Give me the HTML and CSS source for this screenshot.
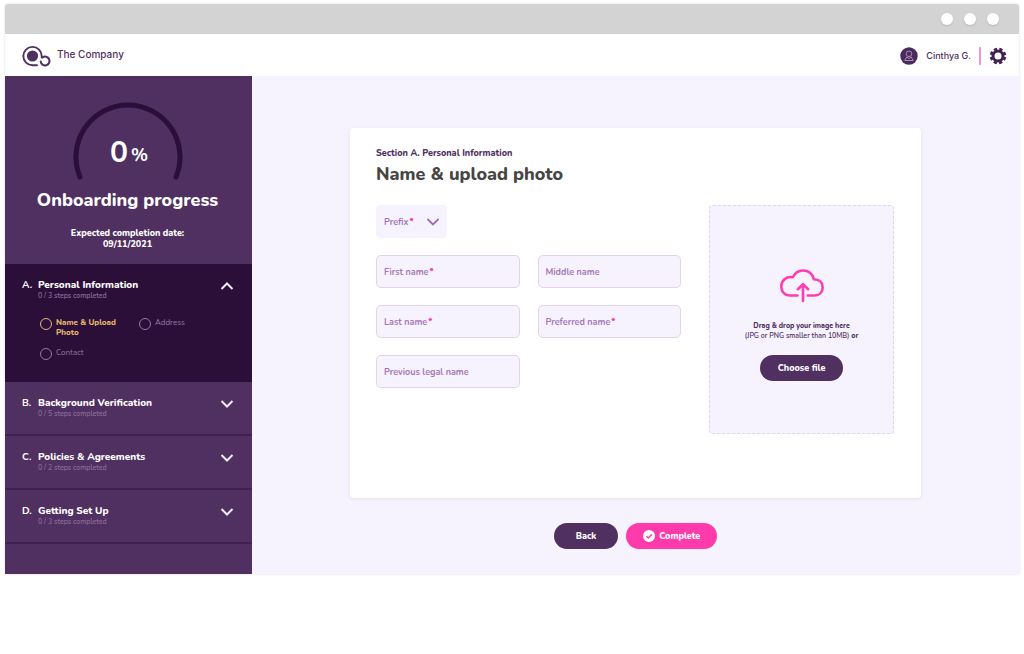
FILE: index.html
```html
<!DOCTYPE html>
<html lang="en">
<head>
<meta charset="utf-8">
<meta name="viewport" content="width=device-width, initial-scale=1">
<title>Onboarding – The Company</title>
<link rel="stylesheet" href="styles.css">
</head>
<body>
<div class="window">
  <div class="titlebar"><span class="dot"></span><span class="dot"></span><span class="dot"></span></div>
  <header class="header">
    <a class="brand" href="#">
      <svg class="brand-logo" width="30" height="24" viewBox="0 0 30 24" fill="none" stroke="#502f61" stroke-linecap="round">
        <path d="M15 21.300H10.500A9.200 9.200 0 1 1 19.700 12.100V13.500" stroke-width="1.900"/>
        <circle cx="10.500" cy="12" r="5.600" fill="#502f61" stroke="none"/>
        <path d="M20.500 13.400A4.400 4.400 0 1 1 18.700 17.400" stroke-width="2"/>
      </svg>
      <span>The Company</span>
    </a>
    <div class="account">
      <svg width="18" height="18" viewBox="0 0 18 18" fill="none" stroke="#a68bb3">
        <circle cx="9" cy="9" r="8.700" fill="#4b2a5e" stroke="none"/>
        <circle cx="9" cy="6.800" r="2.800"/>
        <path d="M4.800 13.500L6.700 10L9 11.500L11.300 10L13.200 13.500Z"/>
      </svg>
      <span class="account-name">Cinthya G.</span>
      <span class="divider"></span>
      <button class="icon-button" type="button" aria-label="Settings">
        <svg width="18" height="18" viewBox="0 0 18 18" fill="none" stroke="#43224f">
          <circle cx="9" cy="9" r="5" stroke-width="3"/>
          <circle cx="9" cy="9" r="7" stroke-width="2.600" stroke-dasharray="3.200 2.298" stroke-dashoffset="-1.100"/>
        </svg>
      </button>
    </div>
  </header>
  <div class="body">
    <aside class="sidebar">
      <section class="progress">
        <div class="gauge">
          <svg class="gauge-arc" width="110" height="80" viewBox="0 0 110 80" fill="none" stroke="#2b0f38" stroke-width="5" stroke-linecap="round"><path d="M7 75A52 52 0 1 1 103 75"/></svg>
          <p class="gauge-value">0<span class="gauge-unit">%</span></p>
        </div>
        <h2 class="progress-title">Onboarding progress</h2>
        <p class="progress-date">Expected completion date:<br>09/11/2021</p>
      </section>
      <section class="group group-open">
        <button class="group-head" type="button" aria-expanded="true">
          <span class="letter">A.</span>
          <span class="group-text"><span class="group-name">Personal Information</span><span class="group-note">0 / 3 steps completed</span></span>
          <svg class="chevron" width="14" height="10" viewBox="0 0 14 10"><path d="M1.500 8L7 2.500L12.500 8"/></svg>
        </button>
        <nav class="steps">
          <a class="step step-current" href="#"><span class="ring"></span><span>Name &amp; Upload Photo</span></a>
          <a class="step" href="#"><span class="ring"></span><span>Address</span></a>
          <a class="step" href="#"><span class="ring"></span><span>Contact</span></a>
        </nav>
      </section>
      <section class="group">
        <button class="group-head" type="button" aria-expanded="false">
          <span class="letter">B.</span>
          <span class="group-text"><span class="group-name">Background Verification</span><span class="group-note">0 / 5 steps completed</span></span>
          <svg class="chevron" width="14" height="10" viewBox="0 0 14 10"><path d="M1.500 2L7 7.500L12.500 2"/></svg>
        </button>
      </section>
      <section class="group">
        <button class="group-head" type="button" aria-expanded="false">
          <span class="letter">C.</span>
          <span class="group-text"><span class="group-name">Policies &amp; Agreements</span><span class="group-note">0 / 2 steps completed</span></span>
          <svg class="chevron" width="14" height="10" viewBox="0 0 14 10"><path d="M1.500 2L7 7.500L12.500 2"/></svg>
        </button>
      </section>
      <section class="group">
        <button class="group-head" type="button" aria-expanded="false">
          <span class="letter">D.</span>
          <span class="group-text"><span class="group-name">Getting Set Up</span><span class="group-note">0 / 3 steps completed</span></span>
          <svg class="chevron" width="14" height="10" viewBox="0 0 14 10"><path d="M1.500 2L7 7.500L12.500 2"/></svg>
        </button>
      </section>
    </aside>
    <main class="main">
      <form class="form">
        <div class="card">
          <p class="eyebrow">Section A. Personal Information</p>
          <h1 class="title">Name &amp; upload photo</h1>
          <div class="columns">
            <div class="fields">
              <div class="prefix">
                <label class="label" for="prefix">Prefix<span class="required">*</span></label>
                <svg width="14" height="10" viewBox="0 0 14 10" fill="none" stroke="#a06cb4" stroke-width="1.800"><path d="M1.500 2L7 7.500L12.500 2"/></svg>
                <select class="prefix-select" id="prefix"><option value=""></option></select>
              </div>
              <div class="field"><label class="label" for="first">First name<span class="required">*</span></label><input class="input" id="first" type="text"></div>
              <div class="field"><label class="label" for="middle">Middle name</label><input class="input" id="middle" type="text"></div>
              <div class="field"><label class="label" for="last">Last name<span class="required">*</span></label><input class="input" id="last" type="text"></div>
              <div class="field"><label class="label" for="preferred">Preferred name<span class="required">*</span></label><input class="input" id="preferred" type="text"></div>
              <div class="field"><label class="label" for="previous">Previous legal name</label><input class="input" id="previous" type="text"></div>
            </div>
            <div class="upload">
              <svg width="46" height="36" viewBox="0 0 46 36" fill="none" stroke="#ff3db1" stroke-width="2.600" stroke-linecap="round" stroke-linejoin="round">
                <path d="M18.500 27.500H11C5.500 27.500 2.300 23.500 2.300 18.500C2.300 12.500 7 8.200 13.800 9.200C16 5 19.500 2.500 24 2.500C29.500 2.500 33.500 6 34.800 11.200C40.500 11.200 43.700 14.800 43.700 19.200C43.700 24 40.500 27.500 35.500 27.500H28.800"/>
                <path d="M24 33V17M18.800 21.200L24 16.200L29.200 21.200"/>
              </svg>
              <p class="upload-text"><strong>Drag &amp; drop your image here</strong><br>(JPG or PNG smaller than 10MB) <strong>or</strong></p>
              <button class="button" type="button">Choose file</button>
            </div>
          </div>
        </div>
        <div class="actions">
          <button class="button button-back" type="button">Back</button>
          <button class="button button-pink" type="submit">
            <svg width="12" height="12" viewBox="0 0 12 12" fill="none"><circle cx="6" cy="6" r="6" fill="#fff"/><path d="M3.300 6.200L5.300 8L8.700 4.400" stroke="#ff3aab" stroke-width="1.500"/></svg>
            Complete
          </button>
        </div>
      </form>
    </main>
  </div>
</div>
</body>
</html>
```
FILE: styles.css
```css
* { box-sizing: border-box; }

body {
  margin: 0;
  padding: 4px 5px;
  background: #fff;
  color: #502f61;
  font-family: Nunito, "Open Sans", sans-serif;
  font-size: 9px;
}

p, h1, h2 { margin: 0; }
button { font: inherit; border: 0; cursor: pointer; }
a { color: inherit; text-decoration: none; }
svg { display: block; flex: none; }

.window { border-radius: 3px 3px 0 0; overflow: hidden; box-shadow: 0 0 3px #0002; }

.titlebar {
  display: flex;
  align-items: center;
  justify-content: flex-end;
  gap: 11px;
  height: 30px;
  padding: 0 20px;
  background: #d3d3d3;
}
.dot { width: 12px; height: 12px; border-radius: 50%; background: #fff; box-shadow: 0 1px 2px #0002; }

.header {
  display: flex;
  align-items: center;
  justify-content: space-between;
  height: 42px;
  padding: 1px 12px 0 17px;
}
.brand { display: flex; align-items: flex-start; gap: 5px; font: 500 10px/20px Inter, sans-serif; }
.account { display: flex; align-items: center; gap: 8px; }
.account-name { font: 500 9px/16px Inter, sans-serif; }
.divider { width: 2px; height: 18px; background: #ff8fce; }
.icon-button { padding: 0; background: none; }

.body { display: flex; }

.sidebar { flex: none; width: 247px; background: #502f61; color: #fff; }
.progress { height: 188px; padding: 26px 2px 0 0; text-align: center; }
.gauge { display: grid; justify-items: center; align-items: center; }
.gauge-arc, .gauge-value { grid-area: 1 / 1; }
.gauge-value { padding: 24px 0 0 3px; font-size: 30px; line-height: 40px; font-weight: 700; }
.gauge-unit { padding-left: 3px; font-size: 18px; vertical-align: 1px; }
.progress-title { margin-top: 5px; font-size: 18px; line-height: 26px; font-weight: 800; }
.progress-date { margin-top: 15px; font-size: 9px; line-height: 11px; font-weight: 800; }

.group { min-height: 54px; border-bottom: 2px solid #40214f; }
.group-open { min-height: 118px; border-bottom: 0; background: #2b0f38; }
.group-head {
  display: flex;
  width: 100%;
  padding: 15px 18px 0 17px;
  background: none;
  color: #fff;
  text-align: left;
}
.letter { width: 16px; font-size: 10px; line-height: 12px; font-weight: 700; }
.group-text { flex: 1; display: flex; flex-direction: column; }
.group-name { font-size: 10px; line-height: 13px; font-weight: 800; }
.group-note { font-size: 7px; line-height: 8px; font-weight: 600; color: #8b6e9a; }
.chevron { margin-top: 2px; fill: none; stroke: #f0eaf3; stroke-width: 2; }

.steps {
  display: grid;
  grid-template-columns: 82px 1fr;
  gap: 10px 17px;
  padding: 18px 18px 0 35px;
}
.step { display: flex; gap: 4px; color: #9478a3; font-size: 8px; line-height: 10px; }
.step-current { color: #e5b76e; font-weight: 800; }
.ring { flex: none; width: 12px; height: 12px; border: 1px solid currentColor; border-radius: 50%; }

.main { flex: 1; padding: 52px 98px 25px; background: #f6f3fe; }
.card {
  min-height: 370px;
  padding: 19px 27px 26px 26px;
  border-radius: 4px;
  background: #fff;
  box-shadow: 0 1px 4px #502f6118;
}
.eyebrow { font-size: 9px; line-height: 12px; font-weight: 800; }
.title { margin-top: 2px; color: #454545; font-size: 18px; line-height: 26px; font-weight: 800; }
.columns { display: flex; gap: 28px; margin-top: 18px; }
.fields { flex: 1; display: grid; grid-template-columns: 1fr 1fr; align-content: start; gap: 17px 18px; }

.label { color: #a678b8; font-size: 9px; font-weight: 700; white-space: nowrap; }
.required { padding-left: 1px; color: #ff3aab; font-weight: 900; }
.prefix {
  grid-column: 1 / -1;
  justify-self: start;
  position: relative;
  display: flex;
  align-items: center;
  justify-content: space-between;
  width: 71px;
  height: 33px;
  padding: 0 7px 0 8px;
  border-radius: 4px;
  background: #f6f3fe;
}
.prefix-select { position: absolute; inset: 0; width: 100%; border: 0; background: none; appearance: none; }
.field {
  display: flex;
  align-items: center;
  min-width: 0;
  height: 33px;
  padding: 0 7px;
  border: 1px solid #e3d4ec;
  border-radius: 5px;
  background: #f6f3fe;
}
.input { flex: 1; min-width: 0; width: 0; padding: 0 0 0 4px; border: 0; outline: 0; background: none; font: inherit; }

.upload {
  flex: none;
  display: flex;
  flex-direction: column;
  align-items: center;
  justify-content: center;
  width: 185px;
  height: 229px;
  padding-top: 10px;
  border: 1px dashed #e0d5eb;
  border-radius: 4px;
  background: #f6f3fe;
}
.upload-text { margin: 17px 0 14px; font-size: 7px; line-height: 10px; font-weight: 600; text-align: center; }
.upload-text strong { font-weight: 800; }

.button {
  display: flex;
  align-items: center;
  gap: 4px;
  height: 26px;
  padding: 0 18px;
  border-radius: 13px;
  background: #502f61;
  color: #fff;
  font-size: 9px;
  font-weight: 800;
}
.button-back { padding: 0 22px; }
.button-pink { padding: 0 17px; background: #ff3aab; }
.actions { display: flex; justify-content: center; gap: 8px; margin-top: 25px; }
```
